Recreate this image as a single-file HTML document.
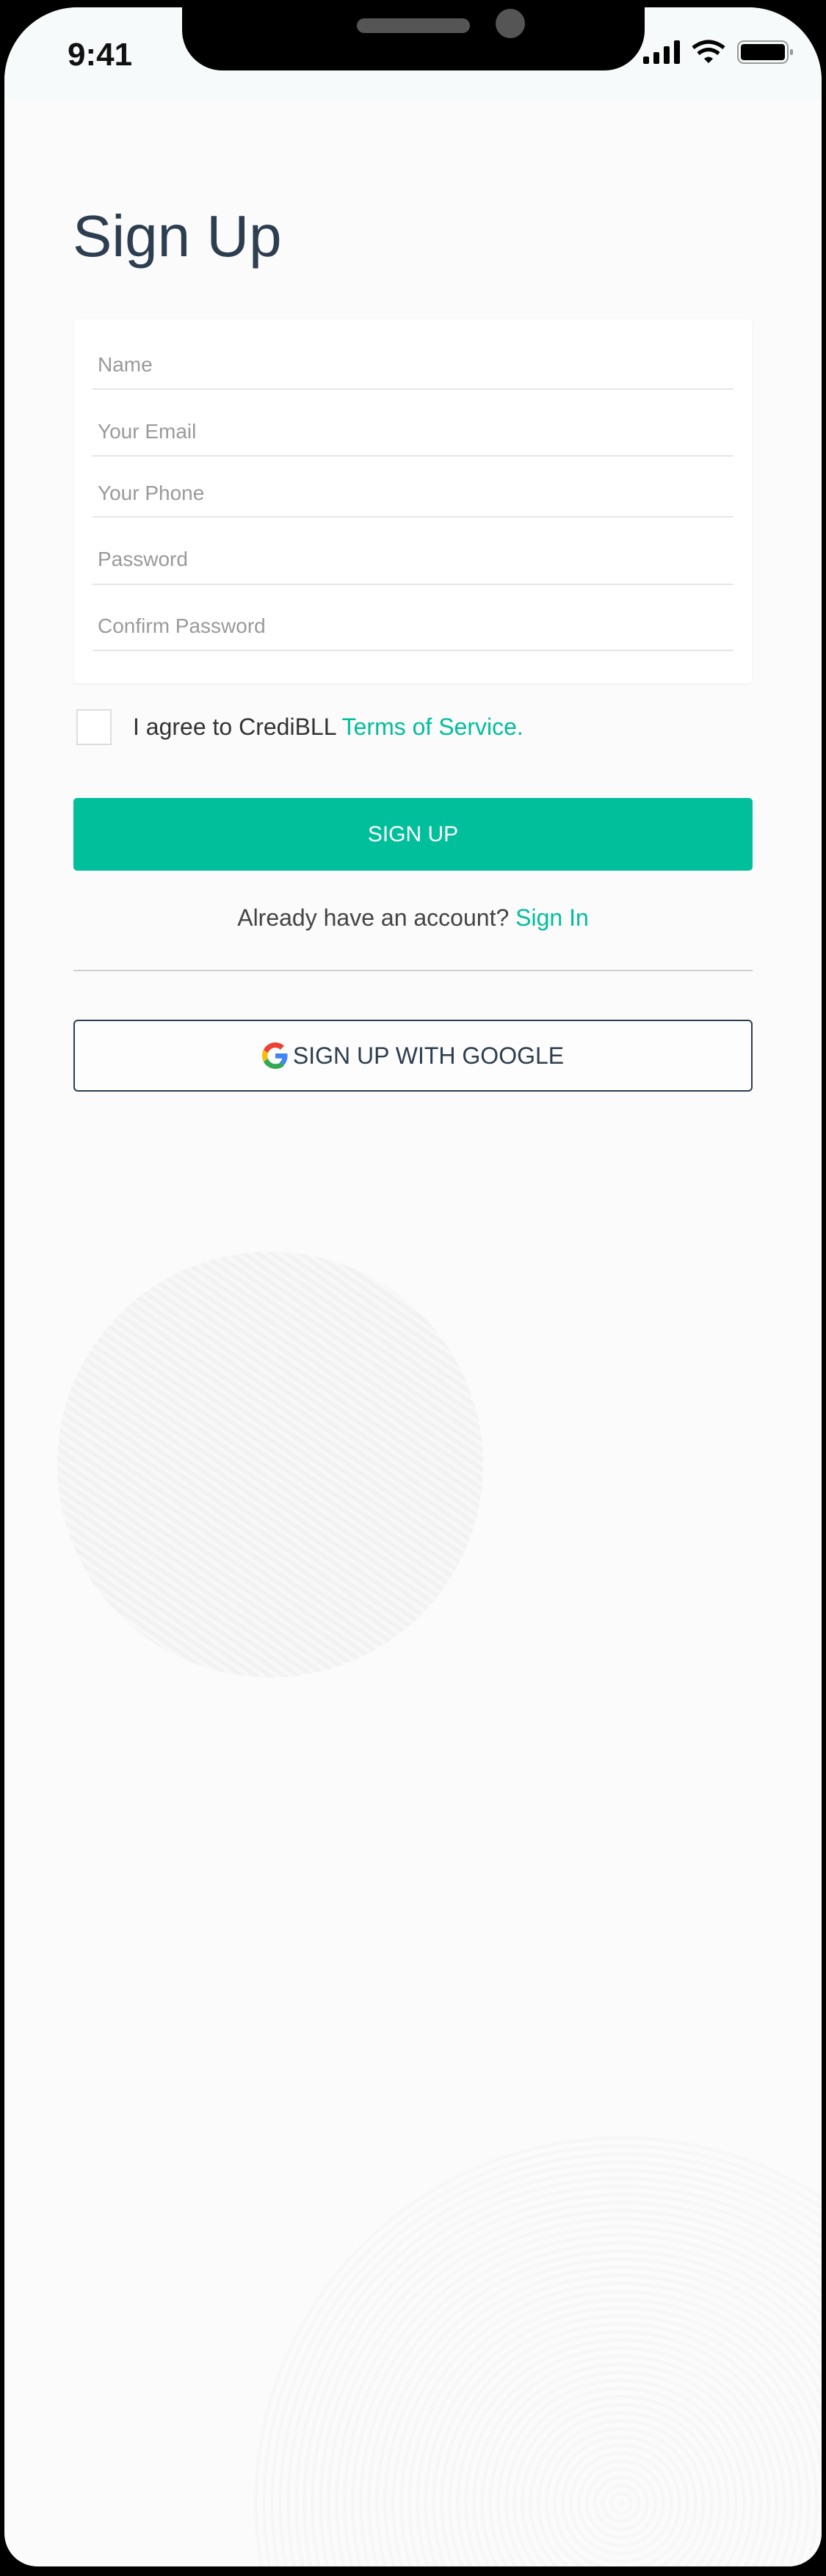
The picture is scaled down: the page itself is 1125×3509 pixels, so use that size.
<!DOCTYPE html>
<html><head><meta charset="utf-8"><style>
*{margin:0;padding:0;box-sizing:border-box}
html,body{width:1125px;height:3509px;overflow:hidden}
body{background:#000;position:relative;font-family:"Liberation Sans",sans-serif}
.screen{position:absolute;left:6px;top:10px;width:1113px;height:3486px;background:#fbfbfb;border-radius:100px 100px 45px 45px;overflow:hidden}
.status{position:absolute;left:0;top:0;width:100%;height:125px;background:#f6fafa}
.notch{position:absolute;left:242px;top:-10px;width:630px;height:96px;background:#000;border-radius:0 0 55px 55px}
.speaker{position:absolute;left:480px;top:15px;width:154px;height:20px;border-radius:10px;background:#555}
.cam{position:absolute;left:669px;top:2px;width:40px;height:40px;border-radius:50%;background:#555}
.abs{position:absolute}
.fp{position:absolute;border-radius:50%}
.label{position:absolute;left:127px;font-size:28px;line-height:32px;color:#9a9a9a}
.line{position:absolute;left:120px;width:873px;height:2px;background:#e6e6e6}
</style></head><body>
<div class="screen">
 <div class="status"></div>
 <div class="fp" style="left:72px;top:1695px;width:580px;height:580px;background:repeating-linear-gradient(35deg,#f1f1f1 0 6px,#f8f8f8 6px 11px);opacity:.9"></div>
 <div class="fp" style="left:340px;top:2900px;width:1000px;height:1000px;background:repeating-radial-gradient(circle at 50% 50%,#f7f7f7 0 5px,#fbfbfb 5px 11px)"></div>
 <div class="notch"></div>
 <div class="speaker"></div><div class="cam"></div>
 <div class="abs" style="left:86px;top:40px;font-size:44px;font-weight:bold;color:#111">9:41</div>
 <svg class="abs" style="left:870px;top:43px" width="210" height="34" viewBox="0 0 210 34">
  <rect x="0" y="24" width="8" height="10" rx="2" fill="#000"/>
  <rect x="14" y="18" width="8" height="16" rx="2" fill="#000"/>
  <rect x="28" y="10" width="8" height="24" rx="2" fill="#000"/>
  <rect x="42" y="2" width="8" height="32" rx="2" fill="#000"/>
  <path d="M68 12 Q89 -4 110 12" stroke="#000" stroke-width="5" fill="none"/>
  <path d="M75 20 Q89 9 103 20" stroke="#000" stroke-width="5" fill="none"/>
  <path d="M83 27 L89 33 L95 27 Q89 22 83 27Z" fill="#000"/>
  <rect x="129" y="3" width="68" height="30" rx="8" stroke="#999" stroke-width="2" fill="none"/>
  <rect x="133" y="7" width="60" height="22" rx="4" fill="#000"/>
  <rect x="200" y="14" width="4" height="8" rx="2" fill="#999"/>
 </svg>
 <div class="abs" style="left:93px;top:266px;font-size:80px;color:#2c3e50">Sign Up</div>
 <div class="abs" style="left:95px;top:425px;width:923px;height:496px;background:#fff;border-radius:5px;box-shadow:0 1px 4px rgba(0,0,0,.06)"></div>
 <div class="label" style="top:471px">Name</div><div class="line" style="top:519px"></div>
 <div class="label" style="top:562px">Your Email</div><div class="line" style="top:610px"></div>
 <div class="label" style="top:646px">Your Phone</div><div class="line" style="top:693px"></div>
 <div class="label" style="top:736px">Password</div><div class="line" style="top:785px"></div>
 <div class="label" style="top:827px">Confirm Password</div><div class="line" style="top:875px"></div>
 <div class="abs" style="left:98px;top:956px;width:48px;height:49px;border:2px solid #ddd;background:#fff"></div>
 <div class="abs" style="left:175px;top:962px;font-size:32px;color:#333">I agree to CrediBLL <span style="color:#00bf9a">Terms of Service.</span></div>
 <div class="abs" style="left:94px;top:1077px;width:925px;height:99px;background:#00bf9a;border-radius:5px;color:#fff;font-size:30px;text-align:center;line-height:99px">SIGN UP</div>
 <div class="abs" style="left:0;top:1222px;width:1113px;text-align:center;font-size:32px;color:#444">Already have an account? <span style="color:#00bf9a">Sign In</span></div>
 <div class="abs" style="left:94px;top:1311px;width:925px;height:2px;background:#d0d0d0"></div>
 <div class="abs" style="left:94px;top:1379px;width:925px;height:98px;border:2px solid #2c3e50;border-radius:6px;background:#fdfdfd;text-align:center;line-height:94px;font-size:32px;color:#2c3e50">
  <svg style="vertical-align:-7px;margin-right:6px" width="36" height="36" viewBox="0 0 48 48"><path fill="#EA4335" d="M24 9.5c3.5 0 6.6 1.2 9.1 3.6l6.8-6.8C35.8 2.4 30.3 0 24 0 14.6 0 6.6 5.4 2.6 13.3l7.9 6.2C12.4 13.7 17.7 9.5 24 9.5z"/><path fill="#4285F4" d="M46.1 24.5c0-1.6-.1-3.1-.4-4.5H24v9h12.4c-.5 2.9-2.2 5.3-4.6 7l7.2 5.6c4.2-3.900 7.1-9.7 7.1-17.1z"/><path fill="#FBBC05" d="M10.5 28.6c-.5-1.4-.8-3-.8-4.6s.3-3.2.8-4.6l-7.9-6.2C.9 16.5 0 20.1 0 24s.9 7.5 2.6 10.8l7.9-6.2z"/><path fill="#34A853" d="M24 48c6.5 0 11.9-2.1 15.9-5.8l-7.2-5.6c-2.2 1.5-5.1 2.4-8.7 2.4-6.3 0-11.6-4.2-13.5-10l-7.9 6.2C6.6 42.6 14.6 48 24 48z"/></svg>SIGN UP WITH GOOGLE
 </div>
</div>
</body></html>
